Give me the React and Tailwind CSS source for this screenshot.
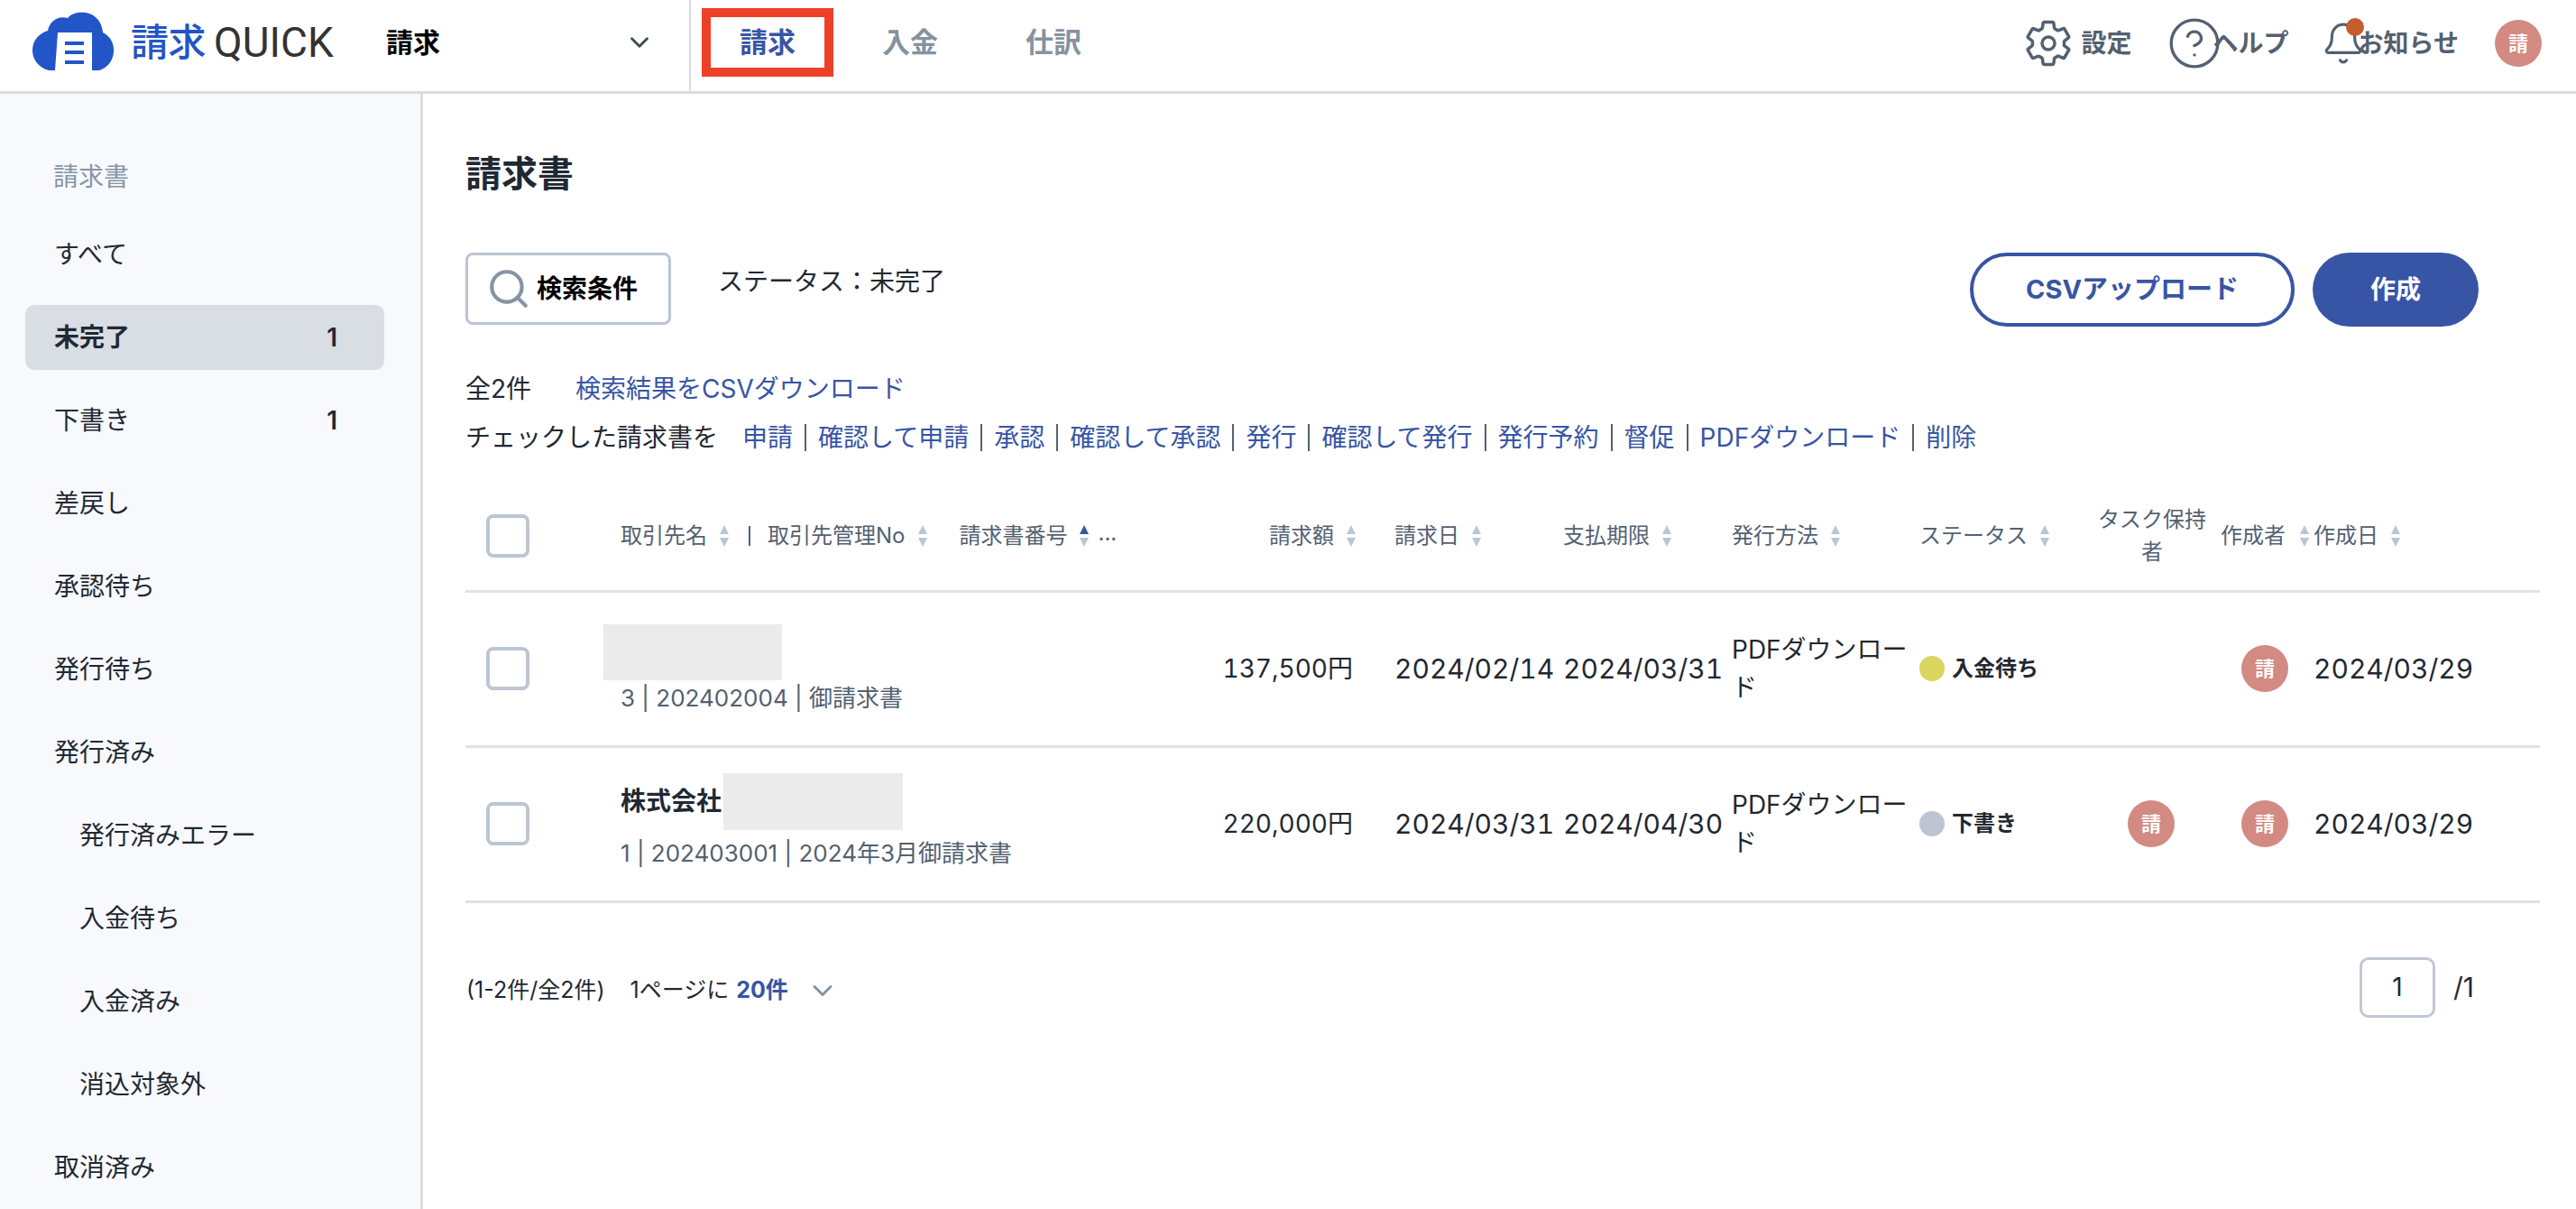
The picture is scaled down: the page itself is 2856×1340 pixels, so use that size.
import React from "react";
import { ChevronDown, CircleHelp, Bell, Search } from "lucide-react";
import { IoSettingsOutline } from "react-icons/io5";

const SIDE_ITEMS = [
  { label: "すべて" },
  { label: "未完了", count: 1, active: true },
  { label: "下書き", count: 1 },
  { label: "差戻し" },
  { label: "承認待ち" },
  { label: "発行待ち" },
  { label: "発行済み" },
  { label: "発行済みエラー", sub: true },
  { label: "入金待ち", sub: true },
  { label: "入金済み", sub: true },
  { label: "消込対象外", sub: true },
  { label: "取消済み" },
];

const ACTIONS = ["申請", "確認して申請", "承認", "確認して承認", "発行", "確認して発行", "発行予約", "督促", "PDFダウンロード", "削除"];

const ROWS = [
  { amount: "137,500円", issued: "2024/02/14", due: "2024/03/31", status: "入金待ち", dot: "bg-[#d9d55f]", sub: "3 | 202402004 | 御請求書", created: "2024/03/29" },
  { amount: "220,000円", issued: "2024/03/31", due: "2024/04/30", status: "下書き", dot: "bg-[#bcc5d1]", sub: "1 | 202403001 | 2024年3月御請求書", created: "2024/03/29", name: "株式会社", task: true },
];

const thCls = "p-0 pt-[3px] font-normal";
const numCls = "p-0 text-[30px] tabular-nums whitespace-nowrap";

function Sort({ active }) {
  return (
    <svg width="10" height="24" viewBox="0 0 10 24" className="shrink-0">
      <path d="M5 0 L10 10 L0 10 Z" fill={active ? "#3855a5" : "#bcc5d1"} />
      <path d="M5 24 L10 14 L0 14 Z" fill="#bcc5d1" />
    </svg>
  );
}

function Avatar() {
  return (
    <div className="w-[52px] h-[52px] rounded-full bg-[#d38a82] flex items-center justify-center text-white text-[22px] font-bold">請</div>
  );
}

function Check() {
  return <div className="w-[48px] h-[48px] ml-[23px] rounded-[8px] border-[4px] border-[#bcc5d1] bg-white" />;
}

function Logo() {
  return (
    <div className="flex items-center w-[428px] shrink-0">
      <svg width="92" height="66" viewBox="0 0 92 66" className="ml-[36px] mt-[-3px] shrink-0">
        <path d="M18 65 C6 62 0 52 0 43 C0 32 7 24 17 21 C19 10 29 4 39 7 C44 1 52 0 59 1 C70 3 77 11 78 23 C86 27 91 35 90 45 C89 55 83 62 74 65 Z" fill="#2255c8" />
        <path d="M28 23 H66 V65 H25 Z" fill="#fff" />
        <rect x="36" y="33" width="21" height="4" fill="#2255c8" />
        <rect x="36" y="43" width="21" height="4" fill="#2255c8" />
        <rect x="36" y="54" width="21" height="4" fill="#2255c8" />
      </svg>
      <span className="ml-[17px] text-[42px] leading-none font-medium text-[#2255c8] tracking-[-0.5px]">請求</span>
      <span className="ml-[9px] text-[46px] leading-none text-[#333333] font-normal font-['Roboto',sans-serif]">QUICK</span>
    </div>
  );
}

export default function App() {
  return (
    <div className="w-[2856px] h-[1340px] overflow-hidden bg-white flex flex-col text-[28px] text-[#1f2933] font-['Inter','Noto_Sans_CJK_JP',sans-serif]">
      <header className="h-[104px] shrink-0 flex border-b-[3px] border-[#d9dde3]">
        <div className="w-[766px] shrink-0 flex items-center border-r-[2px] border-[#d9dde3] pb-[7px]">
          <Logo />
          <span className="text-[30px] font-bold text-black">請求</span>
          <ChevronDown size={34} strokeWidth={2} className="ml-[204px] text-[#3f4a57]" />
        </div>
        <nav className="flex items-center pb-[7px] text-[31px] font-bold">
          <div className="ml-[12px] w-[146px] h-[76px] border-[10px] border-[#ee4026] flex items-center justify-center text-[#3855a5]">請求</div>
          <div className="ml-[54px] text-[#8592a0]">入金</div>
          <div className="ml-[97px] text-[#8592a0]">仕訳</div>
        </nav>
        <div className="ml-auto flex items-center pb-[5px] pr-[38px] text-[28px] font-bold text-[#536171]">
          <IoSettingsOutline size={56} className="mr-[9px]" />
          <span>設定</span>
          <CircleHelp size={62} strokeWidth={1.3} className="ml-[38px]" />
          <span className="ml-[-10px]">ヘルプ</span>
          <div className="relative ml-[40px] w-[40px] h-[50px]">
            <Bell size={50} strokeWidth={1.5} className="absolute left-[-5px] top-0" />
            <span className="absolute right-[-3px] top-[-3px] w-[20px] h-[20px] rounded-full bg-[#c45c2c]" />
          </div>
          <span className="ml-[-3px]">お知らせ</span>
          <div className="ml-[40px]"><Avatar /></div>
        </div>
      </header>

      <div className="flex flex-1 min-h-0">
        <aside className="w-[469px] shrink-0 bg-[#f7f9fc] border-r-[3px] border-[#d9dde3] pt-[56px] pl-[28px]">
          <div className="w-[398px] h-[72px] flex items-center pl-[31px] text-[#8595a6] mb-[14px]">請求書</div>
          <div className="flex flex-col gap-[20px]">
            {SIDE_ITEMS.map(item => (
              <div key={item.label} className={`w-[398px] h-[72px] rounded-[10px] flex items-center justify-between pr-[52px] ${item.sub ? "pl-[60px]" : "pl-[32px]"} ${item.active ? "bg-[#d9dde4] font-bold" : ""}`}>
                <span>{item.label}</span>
                {item.count && <span className="font-semibold">{item.count}</span>}
              </div>
            ))}
          </div>
        </aside>

        <main className="flex-1 min-w-0 pt-[59px] pl-[47px] pr-[40px]">
          <h1 className="h-[60px] flex items-center text-[40px] font-bold">請求書</h1>

          <div className="mt-[57px] flex items-start">
            <button className="w-[228px] h-[80px] rounded-[8px] border-[3px] border-[#bcc5d1] flex items-center pl-[20px] gap-[6px] font-bold text-black">
              <Search size={50} strokeWidth={2} className="text-[#8594a5] shrink-0" />
              <span>検索条件</span>
            </button>
            <div className="ml-[52px] mt-[11px]">ステータス：未完了</div>
            <button className="ml-auto mr-[20px] w-[360px] h-[82px] rounded-full border-[4px] border-[#3855a5] font-bold text-[#3855a5] text-[29px]">CSVアップロード</button>
            <button className="mr-[68px] w-[184px] h-[82px] rounded-full bg-[#3855a5] font-bold text-white">作成</button>
          </div>

          <div className="mt-[48px] h-[42px] flex items-center">
            <span>全2件</span>
            <span className="ml-[49px] text-[#3855a5]">検索結果をCSVダウンロード</span>
          </div>
          <div className="mt-[12px] h-[42px] flex items-center">
            <span className="mr-[27px]">チェックした請求書を</span>
            {ACTIONS.map((a, i) => (
              <span key={a} className={`text-[#3855a5] leading-[30px] ${i > 0 ? "border-l-[2px] border-[#536171] ml-[13px] pl-[13px]" : ""}`}>{a}</span>
            ))}
          </div>

          <table className="mt-[25px] w-[2300px] table-fixed border-collapse">
            <thead>
              <tr className="h-[124px] border-b-[3px] border-[#dfe3e8] text-[24px] text-[#536171]">
                <th className={`w-[171px] ${thCls}`}><Check /></th>
                <th className={`w-[660px] ${thCls}`}>
                  <div className="flex items-center pl-[1px]">
                    <span>取引先名</span>
                    <span className="ml-[14px]"><Sort /></span>
                    <span className="ml-[22px] mr-[19px] w-[2px] h-[22px] bg-[#536171]" />
                    <span>取引先管理No</span>
                    <span className="ml-[15px]"><Sort /></span>
                    <span className="ml-[35px]">請求書番号</span>
                    <span className="ml-[14px]"><Sort active /></span>
                    <span className="ml-[10px] leading-none pb-[6px]">...</span>
                  </div>
                </th>
                <th className={`w-[199px] ${thCls}`}>
                  <div className="flex items-center justify-end gap-[14px] pr-[43px]"><span>請求額</span><Sort /></div>
                </th>
                {[["請求日", 187], ["支払期限", 187], ["発行方法", 208], ["ステータス", 198]].map(([t, w]) => (
                  <th key={t} style={{ width: w }} className={thCls}>
                    <div className="flex items-center gap-[14px]"><span>{t}</span><Sort /></div>
                  </th>
                ))}
                <th className={`w-[136px] ${thCls} pr-[16px] leading-[36px] whitespace-nowrap`}>タスク保持<br />者</th>
                <th className={`w-[103px] ${thCls}`}>
                  <div className="flex items-center gap-[16px]"><span>作成者</span><Sort /></div>
                </th>
                <th className={thCls}>
                  <div className="flex items-center gap-[14px]"><span>作成日</span><Sort /></div>
                </th>
              </tr>
            </thead>
            <tbody>
              {ROWS.map(row => (
                <tr key={row.sub} className="h-[172px] border-b-[3px] border-[#dfe3e8]">
                  <td className="p-0"><Check /></td>
                  <td className="p-0 pt-[7px] pl-[1px]">
                    <div className="relative h-[40px] leading-[40px] font-bold">
                      {row.name}
                      <div className={`absolute bg-[#ebebeb] ${row.name ? "left-[114px] top-[-11px] w-[199px] h-[63px]" : "left-[-19px] top-[-4px] w-[198px] h-[62px]"}`} />
                    </div>
                    <div className="mt-[18px] text-[26px] leading-[40px] text-[#536171] whitespace-nowrap">{row.sub}</div>
                  </td>
                  <td className="p-0 pr-[46px] text-right text-[28px] tabular-nums whitespace-nowrap">{row.amount}</td>
                  <td className={numCls}>{row.issued}</td>
                  <td className={numCls}>{row.due}</td>
                  <td className="p-0 leading-[42px] pr-[8px]">PDFダウンロー<br />ド</td>
                  <td className="p-0">
                    <div className="flex items-center gap-[8px] text-[24px] font-bold">
                      <span className={`w-[28px] h-[28px] rounded-full ${row.dot}`} />
                      <span>{row.status}</span>
                    </div>
                  </td>
                  <td className="p-0 pr-[18px]">
                    {row.task && <div className="flex justify-center"><Avatar /></div>}
                  </td>
                  <td className="p-0"><div className="ml-[23px]"><Avatar /></div></td>
                  <td className={numCls}>{row.created}</td>
                </tr>
              ))}
            </tbody>
          </table>

          <div className="mt-[60px] flex items-center">
            <div className="flex items-center pt-[8px]">
              <span className="ml-[1px] text-[25px]">(1-2件/全2件)</span>
              <span className="ml-[28px] text-[25px]">1ページに</span>
              <span className="ml-[8px] text-[25px] font-bold text-[#3855a5]">20件</span>
              <ChevronDown size={36} strokeWidth={2} className="ml-[20px] text-[#8594a5]" />
            </div>
            <div className="ml-auto w-[84px] h-[67px] rounded-[10px] border-[3px] border-[#c0c8d4] flex items-center justify-center">1</div>
            <span className="ml-[20px] mr-[73px] text-[30px]">/1</span>
          </div>
        </main>
      </div>
    </div>
  );
}
